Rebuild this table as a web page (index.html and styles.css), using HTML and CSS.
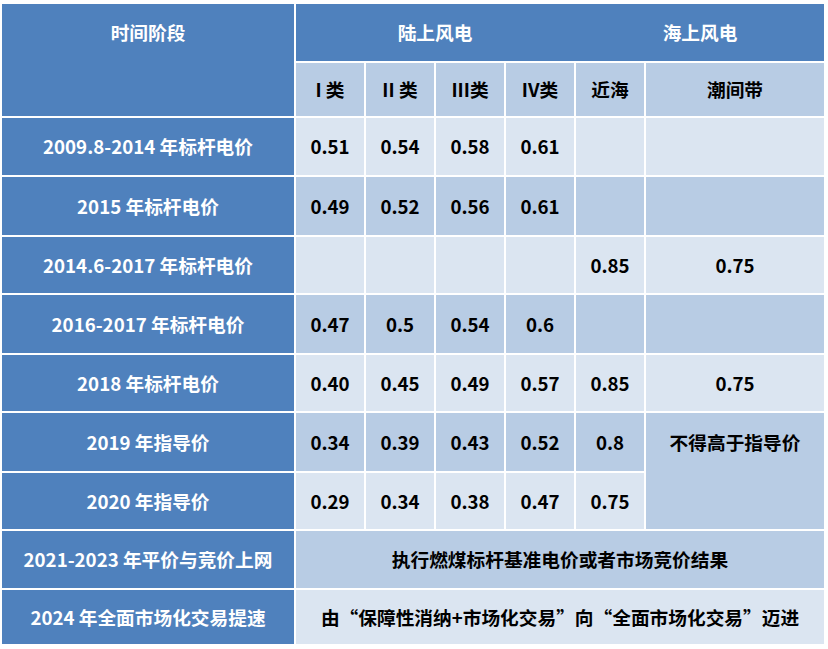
FILE: index.html
```html
<!DOCTYPE html>
<html lang="zh-CN">
<head>
<meta charset="utf-8">
<title>风电电价</title>
<link rel="stylesheet" href="styles.css">
</head>
<body>
<div class="tbl">
  <div class="c dark corner"><div class="top57">时间阶段</div></div>
  <div class="c dark span4 join">陆上风电</div>
  <div class="c dark span2">海上风电</div>

  <div class="c mid">I 类</div>
  <div class="c mid">II 类</div>
  <div class="c mid">III类</div>
  <div class="c mid">IV类</div>
  <div class="c mid">近海</div>
  <div class="c mid">潮间带</div>

  <div class="c dark">2009.8-2014 年标杆电价</div>
  <div class="c light">0.51</div>
  <div class="c light">0.54</div>
  <div class="c light">0.58</div>
  <div class="c light">0.61</div>
  <div class="c light"></div>
  <div class="c light"></div>

  <div class="c dark">2015 年标杆电价</div>
  <div class="c mid">0.49</div>
  <div class="c mid">0.52</div>
  <div class="c mid">0.56</div>
  <div class="c mid">0.61</div>
  <div class="c mid"></div>
  <div class="c mid"></div>

  <div class="c dark">2014.6-2017 年标杆电价</div>
  <div class="c light"></div>
  <div class="c light"></div>
  <div class="c light"></div>
  <div class="c light"></div>
  <div class="c light">0.85</div>
  <div class="c light">0.75</div>

  <div class="c dark">2016-2017 年标杆电价</div>
  <div class="c mid">0.47</div>
  <div class="c mid">0.5</div>
  <div class="c mid">0.54</div>
  <div class="c mid">0.6</div>
  <div class="c mid"></div>
  <div class="c mid"></div>

  <div class="c dark">2018 年标杆电价</div>
  <div class="c light">0.40</div>
  <div class="c light">0.45</div>
  <div class="c light">0.49</div>
  <div class="c light">0.57</div>
  <div class="c light">0.85</div>
  <div class="c light">0.75</div>

  <div class="c dark">2019 年指导价</div>
  <div class="c mid">0.34</div>
  <div class="c mid">0.39</div>
  <div class="c mid">0.43</div>
  <div class="c mid">0.52</div>
  <div class="c mid">0.8</div>
  <div class="c mid tall"><div class="top58">不得高于指导价</div></div>

  <div class="c dark">2020 年指导价</div>
  <div class="c light">0.29</div>
  <div class="c light">0.34</div>
  <div class="c light">0.38</div>
  <div class="c light">0.47</div>
  <div class="c light">0.75</div>

  <div class="c dark">2021-2023 年平价与竞价上网</div>
  <div class="c mid span6">执行燃煤标杆基准电价或者市场竞价结果</div>

  <div class="c dark">2024 年全面市场化交易提速</div>
  <div class="c light span6">由“保障性消纳+市场化交易”向“全面市场化交易”迈进</div>
</div>
</body>
</html>
```

FILE: styles.css
```css
:root {
  --dark: #4f81bd;
  --mid: #b8cce4;
  --light: #dbe5f1;
}

html, body {
  margin: 0;
  background: #ffffff;
}

.tbl {
  display: grid;
  grid-template-columns: 292px 68px 68px 68px 68px 68px 178px;
  grid-template-rows: 57px 53px 57px 58px 56px 58px 56px 58px 56px 57px 54px;
  gap: 2px;
  padding: 4px 0 0 2px;
  width: max-content;
  font-family: "Noto Sans CJK SC", "Noto Sans", sans-serif;
  font-weight: 700;
  font-size: 18.7px;
  line-height: 1;
}

.c {
  display: flex;
  align-items: center;
  justify-content: center;
  white-space: nowrap;
  color: #000000;
}

.dark {
  background: var(--dark);
  color: #ffffff;
}

.mid {
  background: var(--mid);
}

.light {
  background: var(--light);
}

.corner {
  grid-row: span 2;
  align-items: flex-start;
}

.top57,
.top58 {
  display: flex;
  align-items: center;
  justify-content: center;
  width: 100%;
}

.top57 {
  height: 57px;
}

.top58 {
  height: 58px;
}

.tall {
  grid-row: span 2;
  align-items: flex-start;
}

.span4 {
  grid-column: span 4;
}

.span2 {
  grid-column: span 2;
}

.span6 {
  grid-column: span 6;
}

.join {
  box-shadow: 2px 0 0 var(--dark);
}
```
